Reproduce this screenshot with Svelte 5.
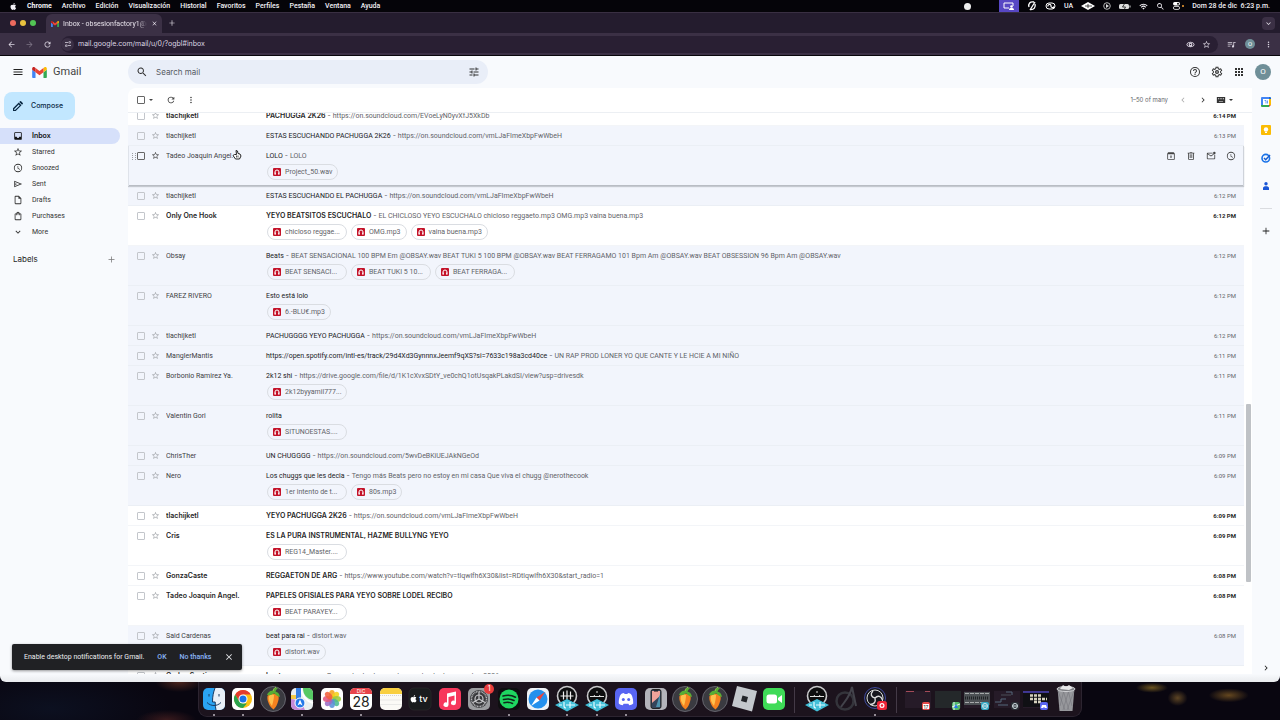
<script>
  const menus = ['Archivo', 'Edición', 'Visualización', 'Historial', 'Favoritos', 'Perfiles', 'Pestaña', 'Ventana', 'Ayuda'];

  const icons = {
    menu: 'M3 18h18v-2H3v2zm0-5h18v-2H3v2zm0-7v2h18V6H3z',
    search: 'M15.5 14h-.8l-.3-.3A6.5 6.5 0 1 0 13.7 14.4l.3.3v.8l5 5 1.5-1.5-5-5zm-6 0a4.5 4.5 0 1 1 0-9 4.5 4.5 0 0 1 0 9z',
    tune: 'M3 17v2h6v-2H3zM3 5v2h10V5H3zm10 16v-2h8v-2h-8v-2h-2v6h2zM7 9v2H3v2h4v2h2V9H7zm14 4v-2H11v2h10zm-6-4h2V7h4V5h-4V3h-2v6z',
    help: 'M11 18h2v-2h-2v2zm1-16a10 10 0 1 0 0 20 10 10 0 0 0 0-20zm0 18a8 8 0 1 1 0-16 8 8 0 0 1 0 16zm0-14a4 4 0 0 0-4 4h2a2 2 0 1 1 4 0c0 2-3 1.800-3 5h2c0-2.200 3-2.500 3-5a4 4 0 0 0-4-4z',
    apps: 'M4 8h4V4H4v4zm6 12h4v-4h-4v4zm-6 0h4v-4H4v4zm0-6h4v-4H4v4zm6 0h4v-4h-4v4zm6-10v4h4V4h-4zm-6 4h4V4h-4v4zm6 6h4v-4h-4v4zm0 6h4v-4h-4v4z',
    star: 'M22 9.240l-7.190-.620L12 2 9.190 8.630 2 9.240l5.460 4.730L5.820 21 12 17.270 18.180 21l-1.630-7.030L22 9.240zM12 15.400l-3.760 2.270 1-4.280-3.320-2.880 4.380-.380L12 6.100l1.710 4.040 4.380.380-3.320 2.880 1 4.280L12 15.400z',
    clock: 'M12 2a10 10 0 1 0 0 20 10 10 0 0 0 0-20zm0 18a8 8 0 1 1 0-16 8 8 0 0 1 0 16zm.5-13H11v6l5.200 3.200.8-1.300-4.500-2.700V7z',
    inbox: 'M19 3H5a2 2 0 0 0-2 2v14c0 1.100.9 2 2 2h14a2 2 0 0 0 2-2V5a2 2 0 0 0-2-2zm0 11h-4a3 3 0 0 1-6 0H5V5h14v9z',
    sent: 'M3 4v16l19-8L3 4zm2 3l11.900 5L5 17v-3.500l6-1.500-6-1.500V7z',
    draft: 'M14 2H6a2 2 0 0 0-2 2v16c0 1.100.9 2 2 2h12a2 2 0 0 0 2-2V8l-6-6zM6 20V4h7v5h5v11H6z',
    bag: 'M19 6h-3a4 4 0 0 0-8 0H5a1 1 0 0 0-1 1v13a2 2 0 0 0 2 2h12a2 2 0 0 0 2-2V7a1 1 0 0 0-1-1zm-7-2a2 2 0 0 1 2 2h-4c0-1.100.9-2 2-2zm6 16H6V8h2v2h2V8h4v2h2V8h2v12z',
    down: 'M16.590 8.590L12 13.170 7.410 8.590 6 10l6 6 6-6-1.410-1.410z',
    left: 'M15.410 7.410L14 6l-6 6 6 6 1.410-1.410L10.830 12l4.580-4.590z',
    right: 'M8.590 16.590L13.170 12 8.590 7.410 10 6l6 6-6 6-1.410-1.410z',
    plus: 'M20 13h-7v7h-2v-7H4v-2h7V4h2v7h7v2z',
    pen: 'M2 16.500V22h5.500L19 10.500 13.500 5 2 16.500zm4 3.500H4.500v-2l9-9 1.800 1.800L6 20zM21.500 8a1.500 1.500 0 0 0 0-2.100L18.100 2.500a1.500 1.500 0 0 0-2.100 0l-1.500 1.500L20 9.500z',
    refresh: 'M17.650 6.350A8 8 0 1 0 19.730 14h-2.080A6 6 0 1 1 12 6c1.660 0 3.140.690 4.220 1.780L13 11h7V4l-2.350 2.350z',
    dots: 'M12 8a2 2 0 1 0 0-4 2 2 0 0 0 0 4zm0 2a2 2 0 1 0 0 4 2 2 0 0 0 0-4zm0 6a2 2 0 1 0 0 4 2 2 0 0 0 0-4z',
    caret: 'M6 9l6 6 6-6z',
    keyboard: 'M2 5h20v14H2zM5 8v2h2V8zm4 0v2h2V8zm4 0v2h2V8zm4 0v2h2V8zM7 15v1h10v-1z',
    archive: 'M20.500 5.200L19 3.500A1.500 1.500 0 0 0 18 3H6c-.5 0-.9.200-1.200.500L3.500 5.200C3.200 5.600 3 6 3 6.500V19c0 1.100.9 2 2 2h14a2 2 0 0 0 2-2V6.500c0-.5-.2-.9-.5-1.300zM5 19V8h14v11H5zm6-9h2v4h2l-3 3-3-3h2v-4z',
    trash: 'M15 4V3H9v1H4v2h1v13c0 1.100.9 2 2 2h10a2 2 0 0 0 2-2V6h1V4h-5zm2 15H7V6h10v13zM9 8h2v9H9zm4 0h2v9h-2z',
    unread: 'M20 4H4a2 2 0 0 0-2 2v12c0 1.100.9 2 2 2h16a2 2 0 0 0 2-2V9h-2v9H4V8l8 5 6-3.800V6.800L12 11 4 6h12V4h4zM20 2a3 3 0 1 0 0 6 3 3 0 0 0 0-6z',
    back: 'M20 11H7.830l5.590-5.590L12 4l-8 8 8 8 1.410-1.410L7.830 13H20v-2z',
    forward: 'M4 11h12.170l-5.590-5.590L12 4l8 8-8 8-1.410-1.410L16.170 13H4v-2z',
    close: 'M19 6.410L17.590 5 12 10.590 6.410 5 5 6.410 10.590 12 5 17.590 6.410 19 12 13.410 17.590 19 19 17.590 13.410 12z',
    site: 'M3 6h9v2H3zM17 3.500a3.500 3.500 0 1 0 0 7 3.500 3.500 0 0 0 0-7zm0 2a1.500 1.500 0 1 1 0 3 1.500 1.500 0 0 1 0-3zM12 16h9v2h-9zM7 13.500a3.500 3.500 0 1 0 0 7 3.500 3.500 0 0 0 0-7zm0 2a1.500 1.500 0 1 1 0 3 1.500 1.500 0 0 1 0-3z',
    eye: 'M12 4.500C7 4.500 2.700 7.600 1 12c1.700 4.400 6 7.500 11 7.500s9.300-3.100 11-7.500c-1.700-4.400-6-7.500-11-7.500zm0 13A9 9 0 0 1 3.200 12a9.800 9.800 0 0 1 17.600 0A9 9 0 0 1 12 17.500zM12 7a5 5 0 1 0 0 10 5 5 0 0 0 0-10zm0 3a2 2 0 1 1 0 4 2 2 0 0 1 0-4z',
    queue: 'M2 5h12v2H2zm0 5h12v2H2zm0 5h7v2H2zM17 5h6v2.500h-4V17a3 3 0 1 1-2-2.800z',
    gear: 'M12 8a4 4 0 1 0 0 8 4 4 0 0 0 0-8zm0 2.500a1.500 1.500 0 1 1 0 3 1.500 1.500 0 0 1 0-3zM9.200 1.500L8.700 4.600l-1.500.9-3-1.200-2.800 4.900 2.500 2v1.600l-2.500 2 2.800 4.900 3-1.200 1.500.9.500 3.100h5.600l.5-3.100 1.500-.9 3 1.200 2.800-4.900-2.500-2v-1.600l2.500-2-2.800-4.900-3 1.200-1.500-.9-.5-3.100H9.200zm1.700 2h2.200l.4 2.400 3.200 1.900 2.300-.9 1.100 1.900-1.900 1.500v3.400l1.900 1.500-1.100 1.900-2.300-.9-3.200 1.900-.4 2.400h-2.200l-.4-2.400-3.200-1.900-2.300.9-1.100-1.900 1.900-1.500v-3.400L3.900 8.800 5 6.900l2.300.9 3.200-1.900z',
    apple: 'M16.500 12.500c0-2.300 1.900-3.400 2-3.500-1.100-1.600-2.800-1.800-3.400-1.800-1.400-.2-2.800.8-3.500.8s-1.800-.8-3-.8c-1.500 0-3 .9-3.800 2.300-1.600 2.800-.4 7 1.200 9.200.8 1.100 1.700 2.400 2.900 2.300 1.200 0 1.600-.7 3-.7s1.800.7 3 .7 2-1.100 2.800-2.200c.9-1.300 1.200-2.500 1.300-2.600-.1 0-2.500-1-2.500-3.700zM14.200 5.700c.6-.8 1.100-1.900 1-3-1 0-2.100.6-2.800 1.400-.6.7-1.200 1.800-1 2.900 1.100.1 2.200-.5 2.800-1.300z',
    wifi: 'M1 9l2 2a12.700 12.700 0 0 1 18 0l2-2A15.600 15.600 0 0 0 1 9zm4 4l2 2a7 7 0 0 1 10 0l2-2a9.900 9.900 0 0 0-14 0zm4 4l3 3 3-3a4.200 4.200 0 0 0-6 0z'
  };

  const folders = [
    ['inbox', 'Inbox'], ['star', 'Starred'], ['clock', 'Snoozed'], ['sent', 'Sent'],
    ['draft', 'Drafts'], ['bag', 'Purchases'], ['down', 'More']
  ];

  const mails = [
    { from: 'tlachijketl', subject: 'PACHUGGA 2K26', text: 'https://on.soundcloud.com/EVoeLyN0yvXfJ5XkDb', time: '6:14 PM', unread: true },
    { from: 'tlachijketl', subject: 'ESTAS ESCUCHANDO PACHUGGA 2K26', text: 'https://on.soundcloud.com/vmLJaFImeXbpFwWbeH', time: '6:13 PM' },
    { from: 'Tadeo Joaquin Angel.', subject: 'LOLO', text: 'LOLO', active: true, files: ['Project_50.wav'] },
    { from: 'tlachijketl', subject: 'ESTAS ESCUCHANDO EL PACHUGGA', text: 'https://on.soundcloud.com/vmLJaFImeXbpFwWbeH', time: '6:12 PM' },
    { from: 'Only One Hook', subject: 'YEYO BEATSITOS ESCUCHALO', text: 'EL CHICLOSO YEYO ESCUCHALO chicloso reggaeto.mp3 OMG.mp3 vaina buena.mp3', time: '6:12 PM', unread: true, files: ['chicloso reggae...', 'OMG.mp3', 'vaina buena.mp3'] },
    { from: 'Obsay', subject: 'Beats', text: 'BEAT SENSACIONAL 100 BPM Em @OBSAY.wav BEAT TUKI 5 100 BPM @OBSAY.wav BEAT FERRAGAMO 101 Bpm Am @OBSAY.wav BEAT OBSESSION 96 Bpm Am @OBSAY.wav', time: '6:12 PM', files: ['BEAT SENSACI...', 'BEAT TUKI 5 10...', 'BEAT FERRAGA...'] },
    { from: 'FAREZ RIVERO', subject: 'Esto está lolo', time: '6:12 PM', files: ['6.-BLU€.mp3'] },
    { from: 'tlachijketl', subject: 'PACHUGGGG YEYO PACHUGGA', text: 'https://on.soundcloud.com/vmLJaFImeXbpFwWbeH', time: '6:12 PM' },
    { from: 'ManglerMantis', subject: 'https://open.spotify.com/intl-es/track/29d4Xd3GynnnxJeemf9qXS?si=7633c198a3cd40ce', text: 'UN RAP PROD LONER YO QUE CANTE Y LE HCIE A MI NIÑO', time: '6:11 PM' },
    { from: 'Borbonio Ramirez Ya.', subject: '2k12 shi', text: 'https://drive.google.com/file/d/1K1cXvxSDtY_ve0chQ1otUsqakPLakdSI/view?usp=drivesdk', time: '6:11 PM', files: ['2k12byyamil777...'] },
    { from: 'Valentin Gori', subject: 'rolita', time: '6:11 PM', files: ['SITUNOESTAS....'] },
    { from: 'ChrisTher', subject: 'UN CHUGGGG', text: 'https://on.soundcloud.com/5wvDeBKiUEJAkNGeOd', time: '6:09 PM' },
    { from: 'Nero', subject: 'Los chuggs que les decia', text: 'Tengo más Beats pero no estoy en mi casa Que viva el chugg @nerothecook', time: '6:09 PM', files: ['1er intento de t...', '80s.mp3'] },
    { from: 'tlachijketl', subject: 'YEYO PACHUGGA 2K26', text: 'https://on.soundcloud.com/vmLJaFImeXbpFwWbeH', time: '6:09 PM', unread: true },
    { from: 'Cris', subject: 'ES LA PURA INSTRUMENTAL, HAZME BULLYNG YEYO', time: '6:09 PM', unread: true, files: ['REG14_Master....'] },
    { from: 'GonzaCaste', subject: 'REGGAETON DE ARG', text: 'https://www.youtube.com/watch?v=tlqwlfh6X30&list=RDtlqwlfh6X30&start_radio=1', time: '6:08 PM', unread: true },
    { from: 'Tadeo Joaquin Angel.', subject: 'PAPELES OFISIALES PARA YEYO SOBRE LODEL RECIBO', time: '6:08 PM', unread: true, files: ['BEAT PARAYEY...'] },
    { from: 'Said Cardenas', subject: 'beat para rai', text: 'distort.wav', time: '6:08 PM', files: ['distort.wav'] },
    { from: 'Carlos Santiago', subject: 'beats para yeyo', text: 'Buenas tardes te mando unos beats de reggaeton 2026', time: '6:08 PM', unread: true }
  ];

  const dock = [
    'finder.', 'chrome.', 'fruit', 'maps.', 'photos', 'calendar.', 'notes', 'tv', 'music', 'settings', 'spotify.', 'safari',
    'mixer.', 'audio.', 'discord.', 'phone', 'fruit', 'fruit', 'roblox', 'facetime', '|', 'audio', 'logic', 'obs.', '|',
    'win1', 'win2', 'win3', 'win4', 'win5', 'trash'
  ];
  const petals = ['#f7a31c', '#f2d21b', '#9ccb3b', '#4dba92', '#5a8fd8', '#9a6cc4', '#e0557f', '#f0603c'];
  const windowMarks = { win1: '#e44b4b', win2: '#55b96a', win3: '#35a9c4', win4: '#2a2d35', win5: '#5865f2' };
</script>

{#snippet icon(name, size = 10)}
  <svg class="icon" width={size} height={size} viewBox="0 0 24 24" aria-hidden="true"><path d={icons[name]} /></svg>
{/snippet}

{#snippet gmailMark(width, height)}
  <svg class="mark" {width} {height} viewBox="0 0 24 18" aria-hidden="true">
    <path fill="#4285f4" d="M1.600 18H5.500V8.700L0 4.600v11.800C0 17.300.7 18 1.600 18z" />
    <path fill="#34a853" d="M18.500 18h3.900c.9 0 1.600-.7 1.600-1.600V4.600l-5.500 4.100z" />
    <path fill="#fbbc04" d="M18.500 1.600v7.100L24 4.600V2.500c0-2-2.300-3.200-3.900-2z" />
    <path fill="#ea4335" d="M5.500 8.700V1.600L12 6.500l6.500-4.900v7.100L12 13.600z" />
    <path fill="#c5221f" d="M0 2.500v2.100l5.500 4.100V1.600L3.900.5C2.300-.7 0 .5 0 2.500z" />
  </svg>
{/snippet}

{#snippet dockArt(name)}
  <svg viewBox="0 0 24 24" width="24" height="24" aria-hidden="true">
    {#if name === 'finder'}
      <rect x="1" y="1" width="22" height="22" rx="5" fill="#2aa4f4" />
      <path d="M13 1h5a5 5 0 0 1 5 5v12a5 5 0 0 1-5 5h-4c-.6-2.500-.8-5-.8-8H10.500C10.500 9 11.500 5 13 1z" fill="#e9f0f8" />
      <path d="M7 7v2.500M17 7v2.500M5 15.500c4 4 10 4 14 0M13 1c-1.500 4-2.500 8-2.500 14h2.700c0 3 .2 5.500.8 8" fill="none" stroke="#173a63" stroke-width="1" />
    {:else if name === 'chrome'}
      <rect x="1" y="1" width="22" height="22" rx="5" fill="#fff" />
      <circle cx="12" cy="12" r="9" fill="#fbc116" />
      <path d="M4.200 7.500A9 9 0 0 1 19.800 7.500H12L8.100 14.200z" fill="#e33b2e" />
      <path d="M4.200 7.500L8.100 14.250 12 16.500h3.900L12 21A9 9 0 0 1 4.200 7.500z" fill="#2ba24c" />
      <circle cx="12" cy="12" r="4.500" fill="#fff" /><circle cx="12" cy="12" r="3.500" fill="#1a73e8" />
    {:else if name === 'fruit'}
      <circle cx="12" cy="12" r="12.500" fill="#3a3a40" stroke="#74747c" stroke-width=".8" />
      <path d="M6.500 9c2-3.500 9-3.500 11 0 1 4-2 11-5 13.500C8.500 20 5.500 13 6.500 9z" fill="#f5821f" />
      <path d="M8 9c1-1.500 4-2 5-1 0 4-1 7-2 11C8.500 16 7 12 8 9z" fill="#ffc04d" />
      <path d="M6 8c1-3 4-5 6-4 1-3 3-3.500 5-3-1 1-2 2-2.500 3.500C17 5 18.500 7 19 10c-3-1-5-2.500-6-4-2 2-4 2.500-7 2z" fill="#58ad33" />
      <path d="M12 4c.5-2 1.500-3 3-4" stroke="#9bd153" fill="none" />
    {:else if name === 'maps'}
      <rect x="1" y="1" width="22" height="22" rx="5" fill="#e9eef0" />
      <path d="M13 1h5a5 5 0 0 1 5 5v7C17 12 13 8 13 1z" fill="#57c964" />
      <path d="M1 12c6 0 11 4 14 11H6a5 5 0 0 1-5-5z" fill="#c58ad7" />
      <path d="M11 1c1 8 5 13 12 15" fill="none" stroke="#fff" stroke-width="2" />
      <path d="M6 1h5v16H6z" fill="#367fe3" /><path d="M1 8h5v4H1z" fill="#f5c944" />
      <circle cx="10" cy="16" r="5" fill="#2478e8" stroke="#fff" /><path d="M10 12.500l2.500 6-2.500-1.500-2.500 1.500z" fill="#fff" />
    {:else if name === 'photos'}
      <rect x="1" y="1" width="22" height="22" rx="5" fill="#fdfdfd" />
      {#each petals as color, n}
        <ellipse cx="12" cy="7.300" rx="2.900" ry="4.400" fill={color} opacity=".88" transform="rotate({n * 45} 12 12)" />
      {/each}
    {:else if name === 'calendar'}
      <rect x="1" y="1" width="22" height="22" rx="5" fill="#fff" />
      <path d="M1 7V6a5 5 0 0 1 5-5h12a5 5 0 0 1 5 5v1z" fill="#e8434a" />
      <text x="12" y="6" font-size="5" fill="#fff" text-anchor="middle">DIC</text>
      <text x="12" y="20" font-size="14" fill="#222" text-anchor="middle">28</text>
    {:else if name === 'notes'}
      <rect x="1" y="1" width="22" height="22" rx="5" fill="#fbfaf6" />
      <path d="M1 7V6a5 5 0 0 1 5-5h12a5 5 0 0 1 5 5v1z" fill="#f9cf3f" />
      <path d="M1 8.500h22" stroke="#bbb" stroke-width=".6" stroke-dasharray="1 1" /><path d="M1 13h22M1 17.500h22" stroke="#ddd" stroke-width=".6" />
    {:else if name === 'tv'}
      <rect x="1" y="1" width="22" height="22" rx="5" fill="#191b1d" stroke="#333" stroke-width=".5" />
      <path d={icons.apple} fill="#fff" transform="translate(1 7) scale(.4)" />
      <text x="15.500" y="15" font-size="9" font-weight="500" fill="#fff" text-anchor="middle">tv</text>
    {:else if name === 'music'}
      <rect x="1" y="1" width="22" height="22" rx="5" fill="#f7375c" />
      <path d="M9 6.500l9-2v11.300a2.500 2.300 0 1 1-1.500-2.100V8.500l-6 1.400v7.800A2.500 2.300 0 1 1 9 15.600z" fill="#fff" />
    {:else if name === 'settings'}
      <rect x="1" y="1" width="22" height="22" rx="5" fill="#9b9da0" />
      <circle cx="12" cy="12" r="9" fill="#38393c" /><circle cx="12" cy="12" r="7.500" fill="none" stroke="#b6b7ba" stroke-width="1.500" stroke-dasharray="1 .6" />
      <circle cx="12" cy="12" r="4" fill="none" stroke="#c8c9cc" stroke-width="1.200" />
      <path d="M12 12V5M12 12l6 3.500M12 12l-6 3.500" stroke="#c8c9cc" stroke-width="1.200" />
    {:else if name === 'spotify'}
      <rect x="1" y="1" width="22" height="22" rx="5" fill="#0e0f10" /><circle cx="12" cy="12" r="9.500" fill="#1ed760" />
      <path d="M6 9c4.500-1.300 9-.8 12.500 1.200M6.500 12.500c4-1 7.500-.6 10.500 1M7 15.700c3-.8 6-.5 8.500.8" fill="none" stroke="#10271a" stroke-width="1.600" stroke-linecap="round" />
    {:else if name === 'safari'}
      <rect x="1" y="1" width="22" height="22" rx="5" fill="#eef2f6" /><circle cx="12" cy="12" r="9.500" fill="#2490ed" />
      <path d="M19 5l-5.500 8.500-3-3z" fill="#f0433a" /><path d="M5 19l5.500-8.500 3 3z" fill="#fff" />
    {:else if name === 'audio' || name === 'mixer'}
      <circle cx="12" cy="9" r="9.500" fill="#0d0d0f" stroke="#c9c9cb" stroke-width="1.600" />
      {#if name === 'mixer'}
        <path d="M5.500 9h13M8.500 4.500v8M12 3.500v9M15.500 4.500v8" stroke="#eee" stroke-width="1.200" />
      {:else}
        <path d="M5 9.500h14M9 8l1 1.500M12 4v2M15 8l-1 1.500" stroke="#ddd" stroke-width="1" />
      {/if}
      <path d="M0 18l12-6 12 6-12 6.500z" fill="#42bfd8" /><path d="M4 18h3M9 15v4q0 2 2 2M11 18h9M15 15v6" stroke="#e5fbff" fill="none" stroke-width="1.200" />
    {:else if name === 'discord'}
      <rect x="1" y="1" width="22" height="22" rx="5" fill="#5865f2" />
      <path d="M8 6.500L10 6l.6 1h2.800l.6-1 2 .5c2 .6 3.500 6 3.200 10-1.200 1-2.500 1.500-4 1.700l-.8-1.500h-4.800l-.8 1.500c-1.500-.2-2.800-.7-4-1.700-.3-4 1.200-9.400 3.200-10z" fill="#fff" />
      <circle cx="9.300" cy="12.500" r="1.500" fill="#5865f2" /><circle cx="14.700" cy="12.500" r="1.500" fill="#5865f2" />
    {:else if name === 'phone'}
      <rect x="1" y="1" width="22" height="22" rx="5" fill="#b3b3ba" /><rect x="7" y="2.500" width="10" height="19" rx="2" fill="#35455b" stroke="#222" />
      <path d="M8 4h8v5l-8 7z" fill="#f0a39a" /><path d="M16 7v13h-4z" fill="#4e93ae" /><rect x="10" y="3.500" width="4" height="1" fill="#111" />
    {:else if name === 'roblox'}
      <path d="M5 -1l20 5-5 20.500L0 19z" fill="#c4c8cd" /><path d="M10.500 8.500l5.500 1.500-1.500 5.500L9 14z" fill="#23252a" />
    {:else if name === 'facetime'}
      <rect x="1" y="1" width="22" height="22" rx="5" fill="#3fdb57" /><rect x="4.500" y="7.500" width="10.500" height="9" rx="2.500" fill="#fff" /><path d="M16 11l4-3v8l-4-3z" fill="#fff" />
    {:else if name === 'logic'}
      <circle cx="11" cy="14" r="8.500" fill="none" stroke="#34343b" stroke-width="2.500" /><path d="M7 20c3-5 9-10 11-20l4 19" fill="none" stroke="#43434b" stroke-width="2" />
    {:else if name === 'obs'}
      <circle cx="12" cy="11" r="10.500" fill="#17171d" stroke="#4b58c0" stroke-width=".8" /><circle cx="12" cy="11" r="8" fill="none" stroke="#ddd" />
      <path d="M12 11c-4-1-5-4-2-7M12 11c3-3 6-2 7.500 2M12 11c1 4-1 6.500-5 6.500" fill="none" stroke="#ddd" stroke-width="1.400" />
      <rect x="14" y="14" width="10" height="9" rx="2.500" fill="#ed2638" /><circle cx="19" cy="18.500" r="2.500" fill="#fff" /><circle cx="19" cy="18.500" r="1.200" fill="#ed2638" />
    {:else if name === 'trash'}
      <path d="M3.500 1h17l-2 23h-13z" fill="#97989c" /><path d="M4 4l7 19M9 3l6 20M14 3l4 16M20 4l-7 19M15 3L9 23M10 3L6 19" stroke="#75767c" stroke-width=".6" />
      <ellipse cx="12" cy="2" rx="9" ry="2.500" fill="#7c7d82" stroke="#cfd0d3" /><path d="M6 2l3-4 3 2 3-2 4 3-4 2z" fill="#e7e7e9" />
    {:else}
      <rect x="-1" y="4" width="26" height="17" fill={name === 'win2' ? '#24282a' : '#261b28'} />
      {#if name === 'win1'}
        <path d="M0 4.500h8M19 4.500h5" stroke="#a34a58" />
      {:else if name === 'win3'}
        <rect x="-1" y="5" width="26" height="13" fill="#4c5054" /><path d="M0 6.500h24M0 15.500h22" stroke="#a7a9ab" stroke-dasharray="4 1" /><path d="M0 11h24" stroke="#202326" stroke-width="3" stroke-dasharray="1 1" />
      {:else if name === 'win4'}
        <path d="M0 15h6v-3h5M3 18h10M11 5h6v3" stroke="#54687b" fill="none" /><path d="M6 8h10" stroke="#4a4e56" />
      {:else if name === 'win5'}
        <rect x="-1" y="5" width="26" height="15" fill="#101014" /><path d="M-1 5h26" stroke="#4d43b8" stroke-width="1.500" /><path d="M6 12h17M6 8.500h11M10 15h8" stroke="#d5d1bd" stroke-width="2.500" stroke-dasharray="3 1" />
      {/if}
      <rect x="16" y="15" width="8" height="8" rx="2" fill={windowMarks[name]} />
      {#if name === 'win1'}
        <rect x="17" y="17" width="6" height="5" fill="#fff" /><text x="20" y="21.500" font-size="5" text-anchor="middle" fill="#333">17</text>
      {:else if name === 'win2'}
        <path d="M18 15v8M16 20l8-3" stroke="#e9f4f8" /><path d="M20 17l2 4h-4z" fill="#2478e8" />
      {:else if name === 'win5'}
        <path d="M18 18h4l1 3h-2l-1-1-1 1h-2z" fill="#fff" />
      {:else}
        <circle cx="20" cy="19" r="2.500" fill="none" stroke="#d6e4e8" /><path d="M18 19h4" stroke="#d6e4e8" />
      {/if}
    {/if}
  </svg>
{/snippet}

<div class="desktop">
  <header class="menubar">
    {@render icon('apple', 9)}
    <strong>Chrome</strong>
    {#each menus as item}<span>{item}</span>{/each}
    <div class="status">
      <span class="moon"></span>
      <span class="share">
        <svg width="12" height="8" viewBox="0 0 12 8"><path d="M1 1h9v3M1 1v5h5" fill="none" stroke="#fff" /><circle cx="8.500" cy="4.500" r="1.300" fill="#fff" /><path d="M6 8c0-3 5-3 5 0z" fill="#fff" /></svg>
      </span>
      <svg width="10" height="10" viewBox="0 0 10 10"><path d="M7 1C3 0 1 3 2 6M8 3c1 3-1 6-5 5.500M3 9l5-8" fill="none" stroke="#fff" stroke-width="1.300" /></svg>
      <svg width="11" height="8" viewBox="0 0 11 8"><rect x="1" y="1" width="9" height="6" rx="3" fill="none" stroke="#fff" /><path d="M3 4.500a1.500 1.500 0 0 1 3-1 1.500 1.500 0 0 0 3 1" fill="none" stroke="#fff" stroke-width="1.200" /></svg>
      <span>UA</span>
      <svg width="14" height="8" viewBox="0 0 14 8"><path d="M0 4l7-4 7 4-7 4z" fill="#fff" /><path d="M4 4h7M7 2v4" stroke="#222" stroke-width=".8" /></svg>
      <svg width="8" height="8" viewBox="0 0 8 8"><circle cx="4" cy="4" r="3.300" fill="none" stroke="#ddd" stroke-width=".8" /><path d="M3 2l3 2-3 2z" fill="#ddd" /></svg>
      <svg width="12" height="7" viewBox="0 0 12 7"><rect x="0" y="1" width="10" height="5" rx="1.500" fill="#ddd" /><path d="M11 2.500v2" stroke="#ddd" /><path d="M6 0L3.500 4h3L5 7" fill="none" stroke="#111" stroke-width=".8" /></svg>
      {@render icon('wifi', 9)}
      {@render icon('search', 9)}
      <span class="control">
        <svg width="7" height="8" viewBox="0 0 7 8"><rect width="7" height="3.500" rx="1.700" fill="#fff" /><rect x=".4" y="4.400" width="6.200" height="3" rx="1.500" fill="none" stroke="#fff" stroke-width=".8" /><circle cx="5" cy="1.700" r="1" fill="#111" /></svg>
        <i></i>
      </span>
      <span>Dom 28 de dic&nbsp; 6:23 p.m.</span>
    </div>
  </header>

  <div class="tabs">
    <div class="lights"><i class="red"></i><i class="yellow"></i><i class="green"></i></div>
    <div class="tab">
      {@render gmailMark(8, 6)}
      <span>Inbox - obsesionfactory1@gr</span>
      <button aria-label="Close tab">{@render icon('close', 7)}</button>
    </div>
    <button aria-label="New tab">{@render icon('plus', 8)}</button>
    <button class="tab-search" aria-label="Search tabs">{@render icon('down', 9)}</button>
  </div>

  <div class="browser">
    <button aria-label="Back">{@render icon('back', 9)}</button>
    <button class="off" aria-label="Forward">{@render icon('forward', 9)}</button>
    <button aria-label="Reload">{@render icon('refresh', 9)}</button>
    <div class="address">
      <span class="site">{@render icon('site', 8)}</span>
      <input aria-label="Address" value="mail.google.com/mail/u/0/?ogbl#inbox" />
      <button aria-label="Page visibility">{@render icon('eye', 9)}</button>
      <button aria-label="Bookmark">{@render icon('star', 9)}</button>
    </div>
    <button aria-label="Media">{@render icon('queue', 9)}</button>
    <button class="avatar small">O</button>
    <button aria-label="Browser menu">{@render icon('dots', 9)}</button>
  </div>

  <div class="gmail">
    <header class="top">
      <div class="brand">
        <button aria-label="Main menu">{@render icon('menu', 12)}</button>
        {@render gmailMark(15, 11)}
        <span>Gmail</span>
      </div>
      <div class="search">
        <button aria-label="Search">{@render icon('search', 12)}</button>
        <input placeholder="Search mail" aria-label="Search mail" />
        <button aria-label="Search options">{@render icon('tune', 12)}</button>
      </div>
      <div class="account">
        <button aria-label="Support">{@render icon('help', 12)}</button>
        <button aria-label="Settings">{@render icon('gear', 12)}</button>
        <button aria-label="Apps">{@render icon('apps', 12)}</button>
        <button class="avatar">O</button>
      </div>
    </header>

    <div class="body">
      <nav>
        <button class="compose">{@render icon('pen', 12)}Compose</button>
        {#each folders as [glyph, name], n}
          <a href="#{name.toLowerCase()}" class:current={n === 0}>{@render icon(glyph, 10)}{name}</a>
        {/each}
        <div class="labels"><span>Labels</span><button aria-label="Create label">{@render icon('plus', 9)}</button></div>
      </nav>

      <main>
        <div class="tools">
          <input type="checkbox" aria-label="Select all" />
          <button class="pick" aria-label="Select">{@render icon('caret', 8)}</button>
          <button class="refresh" aria-label="Refresh">{@render icon('refresh', 10)}</button>
          <button aria-label="More">{@render icon('dots', 10)}</button>
          <div class="pager">
            <span>1–50 of many</span>
            <button class="off" aria-label="Newer">{@render icon('left', 10)}</button>
            <button aria-label="Older">{@render icon('right', 10)}</button>
            <button class="keys" aria-label="Input tool">{@render icon('keyboard', 10)}{@render icon('caret', 8)}</button>
          </div>
        </div>
        <div class="scroller">
          <ul>
            {#each mails as mail}
              <li class:unread={mail.unread} class:active={mail.active}>
                <input type="checkbox" aria-label="Select {mail.from}" />
                <button class="fav" aria-label="Star">{@render icon('star', 9)}</button>
                <span class="from">{mail.from}</span>
                <div class="message">
                  <p><b>{mail.subject}</b>{#if mail.text}<span><i>&nbsp;-&nbsp;</i>{mail.text}</span>{/if}</p>
                  {#if mail.files}
                    <div class="files">
                      {#each mail.files as file}
                        <button class:cut={file.endsWith('...')}>
                          <svg width="8" height="8" viewBox="0 0 8 8" aria-hidden="true"><rect width="8" height="8" rx="1" fill="#c31329" /><path d="M2 6.500V4a2 2 0 0 1 4 0v2.500M2.300 4.500v2M5.700 4.500v2" fill="none" stroke="#fff" stroke-width="1" /></svg>
                          {file}
                        </button>
                      {/each}
                    </div>
                  {/if}
                </div>
                {#if mail.active}
                  <div class="actions">
                    <button aria-label="Archive">{@render icon('archive', 10)}</button>
                    <button aria-label="Delete">{@render icon('trash', 10)}</button>
                    <button aria-label="Mark as unread">{@render icon('unread', 10)}</button>
                    <button aria-label="Snooze">{@render icon('clock', 10)}</button>
                  </div>
                  <svg class="grip" width="4" height="7" viewBox="0 0 4 7" aria-hidden="true"><path d="M0 0h1v1H0zM3 0h1v1H3zM0 2h1v1H0zM3 2h1v1H3zM0 4h1v1H0zM3 4h1v1H3zM0 6h1v1H0zM3 6h1v1H3z" fill="#9a9da2" /></svg>
                {:else}
                  <time>{mail.time}</time>
                {/if}
              </li>
            {/each}
          </ul>
          <div class="track"><i></i></div>
        </div>
      </main>

      <aside>
        <button aria-label="Calendar"><svg width="10" height="10" viewBox="0 0 10 10"><path d="M0 1a1 1 0 0 1 1-1h7v2H2v6H0z" fill="#4285f4" /><path d="M8 0h1a1 1 0 0 1 1 1v1H8z" fill="#1967d2" /><path d="M8 2h2v6H8z" fill="#fbbc04" /><path d="M0 8h8v2H1a1 1 0 0 1-1-1z" fill="#34a853" /><path d="M8 8h2l-2 2z" fill="#ea4335" /><rect x="2" y="2" width="6" height="6" fill="#fff" /><path d="M3.500 3.500H5v3M6.500 3.500v3" stroke="#4285f4" fill="none" stroke-width=".8" /></svg></button>
        <button aria-label="Keep"><svg width="10" height="10" viewBox="0 0 10 10"><rect width="10" height="10" rx="1" fill="#fbbc04" /><circle cx="5" cy="4.500" r="2.200" fill="#fff" /><rect x="4" y="7" width="2" height="1" fill="#fff" /></svg></button>
        <button aria-label="Tasks"><svg width="10" height="10" viewBox="0 0 10 10"><circle cx="4.800" cy="5.200" r="3.800" fill="none" stroke="#1a73e8" stroke-width="1.600" /><path d="M3 5l1.700 1.700L9 2" fill="none" stroke="#1a5fd0" stroke-width="1.500" /></svg></button>
        <button aria-label="Contacts"><svg width="10" height="10" viewBox="0 0 10 10"><circle cx="5" cy="2.700" r="1.700" fill="#1a56d6" /><path d="M2 9V7c0-2.500 6-2.500 6 0v2z" fill="#1a56d6" /></svg></button>
        <hr />
        <button aria-label="Get add-ons">{@render icon('plus', 10)}</button>
        <button class="hide" aria-label="Hide side panel">{@render icon('right', 10)}</button>
      </aside>
    </div>

    <div class="toast" role="status">
      <span>Enable desktop notifications for Gmail.</span>
      <button>OK</button>
      <button>No thanks</button>
      <button class="dismiss" aria-label="Dismiss">{@render icon('close', 10)}</button>
    </div>
  </div>

  <footer>
    <div class="dock">
      {#each dock as entry}
        {#if entry === '|'}
          <span class="rule"></span>
        {:else}
          <div class="app" class:open={entry.endsWith('.')}>
            {@render dockArt(entry.replace('.', ''))}
            {#if entry === 'settings'}<span class="count">1</span>{/if}
          </div>
        {/if}
      {/each}
    </div>
  </footer>

  <svg class="pointer" width="10" height="10" viewBox="0 0 20 20" aria-hidden="true"><path d="M5 9l-3 2 5 7h8l3-6-2-4-4-1-1-5-3-1 1 8z" fill="#fff" stroke="#222" stroke-width="2" /><path d="M9 11v4M12 11v4" stroke="#222" stroke-width="1.500" /></svg>
</div>

<style>
  :global(body) { margin: 0; background: #05040b; }
  * { box-sizing: border-box; }
  .desktop {
    height: 100vh; min-height: 480px; display: flex; flex-direction: column; position: relative; overflow: hidden;
    font-family: Roboto, sans-serif; font-size: 7px; line-height: 10px; color: #1f1f1f;
    background: #0a0814;
  }
  button, input { font: inherit; color: inherit; background: none; border: 0; padding: 0; margin: 0; outline: 0; min-width: 0; }
  button { display: inline-flex; align-items: center; justify-content: center; flex: none; }
  svg { display: block; flex: none; overflow: visible; }
  .icon { fill: currentColor; }
  .off { opacity: .4; }

  .menubar { height: 12px; flex: none; display: flex; align-items: center; gap: 10px; padding: 0 10px 0 9px; background: #050409; color: #f3f1f6; font-weight: 500; white-space: nowrap; }
  .menubar strong { margin-left: -1px; font-weight: 700; }
  .status { margin-left: auto; display: flex; align-items: center; gap: 8px; }
  .moon { width: 7px; height: 7px; border-radius: 50%; background: #eee; margin-right: 20px; }
  .share { width: 20px; height: 12px; background: #5747c4; display: grid; place-items: center; }
  .control { display: flex; align-items: center; gap: 2px; }
  .control i { width: 2px; height: 2px; border-radius: 50%; background: #f4a136; }

  .tabs { height: 21px; flex: none; display: flex; align-items: center; background: #241c2e; border-top: 1px solid #392f42; color: #e6e1ea; padding: 0 5px 0 10px; }
  .lights { display: flex; gap: 4px; width: 36px; }
  .lights i { width: 6px; height: 6px; border-radius: 50%; }
  .red { background: #ed6a5e; } .yellow { background: #e9c23f; } .green { background: #52c454; }
  .tab { display: flex; align-items: center; align-self: stretch; gap: 4px; width: 116px; padding: 0 4px 0 5px; background: #3b3045; border-radius: 6px 6px 0 0; margin-top: 1px; margin-right: 6px; }
  .tab span { flex: 1; overflow: hidden; white-space: nowrap; mask-image: linear-gradient(90deg, #000 90%, transparent); }
  .tab-search { margin-left: auto; width: 13px; height: 13px; border-radius: 4px; background: #3b3045; }

  .browser { height: 23px; flex: none; display: flex; align-items: center; gap: 9px; padding: 0 7px; background: #3b3045; border-bottom: 1px solid #08060b; color: #dcd6e2; }
  .address { flex: 1; height: 17px; display: flex; align-items: center; gap: 7px; padding: 0 7px 0 0; border-radius: 9px; background: #291f33; }
  .site { width: 13px; height: 13px; border-radius: 50%; background: #3b3045; display: grid; place-items: center; margin-right: -3px; }
  .address input { flex: 1; font-family: Inter, sans-serif; }
  .avatar { width: 16px; height: 16px; border-radius: 50%; background: #6f8f98; color: #fff; font-size: 8px; }
  .avatar.small { width: 10px; height: 10px; font-size: 6px; }

  .gmail { flex: 1; min-height: 0; display: flex; flex-direction: column; position: relative; background: linear-gradient(#f8fafd calc(100% - 8px), #e9ebee); border-radius: 0 0 6px 6px; overflow: hidden; }
  .top { height: 32px; flex: none; display: flex; align-items: center; }
  .brand { width: 128px; display: flex; align-items: center; padding-left: 12px; gap: 8px; color: #444; font-size: 11px; line-height: 16px; }
  .brand button { color: #222; }
  .brand span { margin-left: -2px; }
  .search { flex: 0 1 360px; height: 24px; border-radius: 12px; background: #e9eef8; display: flex; align-items: center; gap: 8px; padding: 0 8px; color: #333; }
  .search input { flex: 1; font-family: Inter, sans-serif; font-size: 8px; }
  .search input::placeholder { color: #555a62; opacity: 1; }
  .account { margin-left: auto; display: flex; align-items: center; gap: 10px; padding-right: 9px; color: #333; }

  .body { flex: 1; min-height: 0; display: flex; }
  nav { width: 128px; flex: none; padding-top: 4px; display: flex; flex-direction: column; }
  .compose { align-self: flex-start; height: 28px; margin: 0 0 8px 4px; padding: 0 12px 0 8px; gap: 7px; border-radius: 8px; background: #c2e7ff; color: #0b2a44; font-family: Inter, sans-serif; font-weight: 500; }
  nav a { display: flex; align-items: center; gap: 9px; height: 16px; padding-left: 13px; margin-right: 8px; color: #333; text-decoration: none; border-radius: 0 8px 8px 0; }
  nav a.current { background: #d6e0fa; font-family: Inter, sans-serif; font-weight: 600; color: #111; }
  .labels { display: flex; justify-content: space-between; align-items: center; padding: 0 12px 0 13px; margin-top: 14px; font-family: Inter, sans-serif; font-size: 8px; }
  .labels button { color: #777; }

  main { flex: 1; min-width: 0; display: flex; flex-direction: column; margin-bottom: 8px; background: #fff; border-radius: 8px 0 0 0; }
  .tools { height: 24px; flex: none; display: flex; align-items: center; padding: 0 17px 0 9px; color: #444; }
  .pick { margin: 0 11px 0 2px; }
  .refresh { margin-right: 10px; }
  .pager { margin-left: auto; display: flex; align-items: center; gap: 10px; color: #5f6368; font-family: Inter, sans-serif; font-size: 6px; }
  .pager button { color: #333; }
  .pager .keys { gap: 1px; margin-left: -2px; }
  input[type='checkbox'] { appearance: none; width: 8px; height: 8px; border: 1px solid #c3c6cb; border-radius: 1px; }
  .tools input[type='checkbox'], .active input[type='checkbox'] { border-color: #666; }
  .scroller { flex: 1; min-height: 0; display: flex; overflow: hidden; border-top: 1px solid #eceff3; }
  ul { flex: 1; min-width: 0; list-style: none; margin: -7px 0 0; padding: 0; }
  li { position: relative; display: grid; grid-template-columns: 8px 9px 94px 1fr auto; column-gap: 6px; align-items: start; min-height: 20px; padding: 0 8px 0 9px; background: #f2f5fc; box-shadow: inset 0 -1px #ebeff5; white-space: nowrap; }
  li > input { margin-top: 6px; }
  .fav { margin-top: 5px; color: #a4a7ac; }
  .from { line-height: 20px; overflow: hidden; color: #3c4043; }
  .message { min-width: 0; }
  p { margin: 0; line-height: 20px; height: 18px; color: #5f6368; }
  p i { font-family: Inter, sans-serif; font-style: normal; }
  b { font-weight: 400; color: #202124; }
  time { font-size: 6px; line-height: 20px; color: #5f6368; }
  .unread { background: #fff; box-shadow: inset 0 -1px #f3f5f8; }
  .unread .from, .unread b, .unread time { font-weight: 700; color: #1f1f1f; }
  .unread .from, .unread b { font-family: Inter, sans-serif; font-weight: 600; }
  .active { z-index: 1; box-shadow: inset 1px 0 #dfe3ea, inset -1px 0 #cfd3da, inset 0 -1px #b9bdc4, 0 1px 1px #c5c9d0; }
  .active .fav { color: #444; }
  .grip { position: absolute; left: 4px; top: 7px; }
  .actions { display: flex; gap: 10px; padding: 5px 0 0; color: #444; }
  .files { display: flex; gap: 4px; height: 22px; padding-left: 1px; }
  .files button { height: 16px; border: 1px solid #dadde2; border-radius: 8px; padding: 0 5px; gap: 4px; color: #5f6368; }
  .files .cut { width: 80px; justify-content: flex-start; }
  .track { width: 8px; display: flex; flex-direction: column; align-items: center; }
  .track::before { content: ''; flex: 292; }
  .track i { flex: 178; width: 5px; border-radius: 1px; background: #bfc2c6; }
  .track::after { content: ''; flex: 92; }

  aside { width: 28px; flex: none; display: flex; flex-direction: column; align-items: center; gap: 16px; padding-top: 8px; }
  aside button { width: 12px; height: 12px; }
  hr { width: 12px; height: 1px; border: 0; margin: 0; background: #dadce0; }
  .hide { margin-top: auto; margin-bottom: 8px; }

  .toast { position: absolute; z-index: 2; left: 12px; bottom: 12px; height: 26px; display: flex; align-items: center; gap: 13px; padding: 0 8px 0 12px; border-radius: 2px; background: #202124; color: #eceef0; box-shadow: 0 1px 3px #0006; }
  .toast button { color: #8ab4f8; font-weight: 500; }
  .toast .dismiss { color: #e8eaed; }

  footer {
    height: 38px; flex: none; display: flex; justify-content: center;
    background:
      radial-gradient(ellipse 16px 5px at 90% 15%, #6b5420, transparent),
      radial-gradient(ellipse 10px 8px at 92% 42%, #5d4524, transparent),
      radial-gradient(ellipse 20px 7px at 96% 35%, #64471f, transparent),
      radial-gradient(ellipse 24px 10px at 14% 0, #4a241d, transparent),
      radial-gradient(ellipse 30px 10px at 13% 100%, #3a1a1d, transparent),
      radial-gradient(ellipse 120px 40px at 4% 70%, #0c1020, transparent),
      #090610;
  }
  .dock { flex: 0 1 884px; height: 35px; display: flex; justify-content: space-between; padding: 5px 3px 0; border: 1px solid #2c2430; border-top: 0; border-radius: 0 0 9px 9px; background: #1c131d; font-family: Inter, sans-serif; }
  .app { position: relative; width: 24px; height: 24px; }
  .open::after { content: ''; position: absolute; left: 11px; top: 27px; width: 2px; height: 2px; border-radius: 50%; background: #bbb5bd; }
  .rule { width: 1px; height: 26px; margin: 0 4px 0 3px; background: #443a47; }
  .count { position: absolute; right: -3px; top: -3px; width: 10px; height: 10px; border-radius: 50%; background: #e83c3c; color: #fff; text-align: center; }
  .pointer { position: absolute; z-index: 3; left: 232px; top: 150px; }
</style>
